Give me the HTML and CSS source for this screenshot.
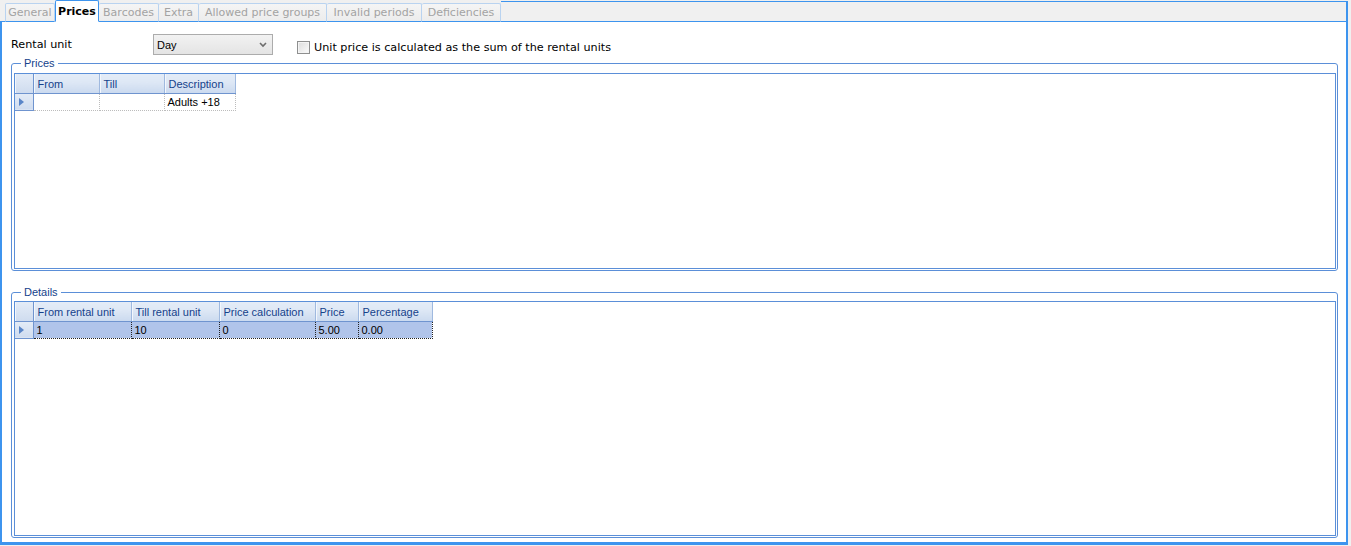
FILE: index.html
```html
<!DOCTYPE html>
<html lang="en">
<head>
  <meta charset="UTF-8" />
  <title>Rental article - Prices</title>
  <link rel="stylesheet" href="styles.css">
</head>
<body>
  <div class="window">
    <div class="tabstrip">
      <div class="tab tab-general">General</div>
      <div class="tab tab-prices active">Prices</div>
      <div class="tab tab-barcodes">Barcodes</div>
      <div class="tab tab-extra">Extra</div>
      <div class="tab tab-groups">Allowed price groups</div>
      <div class="tab tab-periods">Invalid periods</div>
      <div class="tab tab-deficiencies">Deficiencies</div>
      <div class="tab-fill"></div>
    </div>

    <div class="page">
      <div class="unit-row">
        <span class="label">Rental unit</span>
        <div class="combo">
          <span>Day</span>
          <svg class="chevron" width="8" height="6" viewBox="0 0 8 6">
            <path d="M1 1 L4 4 L7 1" fill="none" stroke="#6d6d6d" stroke-width="1.6" />
          </svg>
        </div>
        <label class="check">
          <span class="box"></span>
          Unit price is calculated as the sum of the rental units
        </label>
      </div>

      <fieldset class="group group-prices">
        <legend>Prices</legend>
        <div class="grid">
          <table>
            <colgroup>
              <col class="c-ind"><col style="width:66px"><col style="width:65px"><col style="width:71px">
            </colgroup>
            <thead>
              <tr><th class="ind"></th><th>From</th><th>Till</th><th>Description</th></tr>
            </thead>
            <tbody>
              <tr>
                <td class="ind"><span class="arrow"></span></td>
                <td></td><td></td><td>Adults +18</td>
              </tr>
            </tbody>
          </table>
        </div>
      </fieldset>

      <fieldset class="group group-details">
        <legend>Details</legend>
        <div class="grid">
          <table>
            <colgroup>
              <col class="c-ind"><col style="width:98px"><col style="width:88px"><col style="width:96px"><col style="width:43px"><col style="width:74px">
            </colgroup>
            <thead>
              <tr><th class="ind"></th><th>From rental unit</th><th>Till rental unit</th><th>Price calculation</th><th>Price</th><th>Percentage</th></tr>
            </thead>
            <tbody>
              <tr class="selected">
                <td class="ind"><span class="arrow"></span></td>
                <td>1</td><td>10</td><td>0</td><td>5.00</td><td>0.00</td>
              </tr>
            </tbody>
          </table>
        </div>
      </fieldset>
    </div>
  </div>
</body>
</html>
```

FILE: styles.css
```css
body {
  margin: 0;
  background: #f0f0f0;
  font-family: 'Liberation Sans', Arial, sans-serif;
  font-size: 11px;
  color: #000;
}

.window {
  width: 1348px;
  height: 545px;
  display: flex;
  flex-direction: column;
}

/* Tab strip */
.tabstrip {
  display: flex;
  align-items: flex-end;
  height: 22px;
  box-sizing: border-box;
  padding-left: 5px;
  border-bottom: 1px solid #3d94ee;
  background: #f0f0f0;
  font-family: 'DejaVu Sans', Verdana, sans-serif;
}
.tab {
  height: 19px;
  box-sizing: border-box;
  margin-bottom: -1px;
  border: 1px solid #b9d3f0;
  border-bottom: 1px solid #3d94ee;
  border-left: none;
  border-radius: 2px 2px 0 0;
  background: linear-gradient(#f5f5f5, #ececec);
  color: #a3a3a3;
  text-align: center;
  line-height: 17px;
  white-space: nowrap;
}
.tab-general { width: 50px; border-left: 1px solid #b9d3f0; }
.tab-prices { width: 44px; }
.tab-barcodes { width: 60px; }
.tab-extra { width: 40px; }
.tab-groups { width: 128px; }
.tab-periods { width: 95px; }
.tab-deficiencies { width: 79px; }
.tab.active {
  height: 22px;
  border: 1px solid #3d94ee;
  border-bottom: 1px solid #fff;
  background: #fff;
  color: #000;
  font-weight: bold;
  line-height: 21px;
}
.tab-fill {
  flex: 1;
  height: 21px;
  box-sizing: border-box;
  margin-bottom: -1px;
  border-top: 1px solid #3d94ee;
  border-right: 2px solid #3d94ee;
  border-bottom: 1px solid #3d94ee;
}

/* Page body */
.page {
  flex: 1;
  display: flex;
  flex-direction: column;
  min-height: 0;
  padding: 12px 8px 4px 9px;
  background: #fff;
  border: 2px solid #3d94ee;
  border-top: none;
  border-bottom-width: 3px;
}

.unit-row {
  display: flex;
  align-items: center;
  height: 21px;
  font-family: 'DejaVu Sans', Verdana, sans-serif;
  font-size: 11.2px;
}
.label {
  width: 142px;
}
.combo {
  width: 120px;
  height: 21px;
  box-sizing: border-box;
  display: flex;
  align-items: center;
  justify-content: space-between;
  padding: 0 5px 0 3px;
  border: 1px solid #acacac;
  background: linear-gradient(#f2f2f2, #e4e4e4);
  font-family: 'Liberation Sans', Arial, sans-serif;
  font-size: 11px;
}
.chevron {
  margin-top: 1px;
}
.check {
  display: flex;
  align-items: center;
  gap: 4px;
  margin-left: 24px;
  margin-top: 5px;
}
.check .box {
  width: 11px;
  height: 11px;
  border: 1px solid #8e8f8f;
  background: linear-gradient(135deg, #dcdcdc, #fbfbfb);
  box-shadow: inset 0 0 0 1px #f4f4f4;
}

/* Group boxes */
.group {
  margin: 2px 0 0;
  padding: 3px 1px 1px 2px;
  border: 1px solid #5b8fd8;
  border-radius: 3px;
  min-width: 0;
}
.group legend {
  margin-left: 7px;
  padding: 0 3px;
  line-height: 13px;
  color: #15428b;
}
.group-prices .grid {
  height: 196px;
}
.group-details {
  flex: 1;
  display: flex;
  flex-direction: column;
  margin-top: 15px;
  padding-top: 2px;
}
.group-details .grid {
  flex: 1;
}

/* Data grids */
.grid {
  box-sizing: border-box;
  border: 1px solid #5b8fd8;
  background: #fff;
  overflow: hidden;
}
.grid table {
  border-collapse: collapse;
  table-layout: fixed;
}
.c-ind {
  width: 18px;
}
th {
  height: 19px;
  box-sizing: border-box;
  padding: 4px 0 0 4px;
  line-height: 13px;
  vertical-align: top;
  text-align: left;
  font-weight: normal;
  color: #15428b;
  background: linear-gradient(#e4ecf7 0%, #dde7f5 45%, #cbdaef 100%);
  border-right: 1px solid #9fb9df;
  border-bottom: 1px solid #6f94cf;
  box-shadow: inset 1px 0 0 #f3f7fc;
  white-space: nowrap;
}
td {
  height: 17px;
  box-sizing: border-box;
  padding: 0 0 0 3px;
  border-right: 1px dotted #bcbcbc;
  border-bottom: 1px dotted #bcbcbc;
  white-space: nowrap;
}
td.ind, th.ind {
  padding: 0;
  background: linear-gradient(#e4ecf7, #cfdcef);
  border-right: 1px solid #6f94cf;
  border-bottom: 1px solid #6f94cf;
}
.arrow {
  display: block;
  width: 0;
  height: 0;
  margin-left: 4px;
  border-top: 4px solid transparent;
  border-bottom: 4px solid transparent;
  border-left: 5px solid #5a86c8;
}

tr.selected td {
  background: #b0c4ea;
  border-right: 1px dotted #222;
  border-bottom: 1px dotted #222;
  border-top: 1px dotted #222;
}
tr.selected td.ind {
  background: linear-gradient(#e4ecf7, #cfdcef);
  border: none;
  border-right: 1px solid #6f94cf;
  border-bottom: 1px solid #6f94cf;
}
```
